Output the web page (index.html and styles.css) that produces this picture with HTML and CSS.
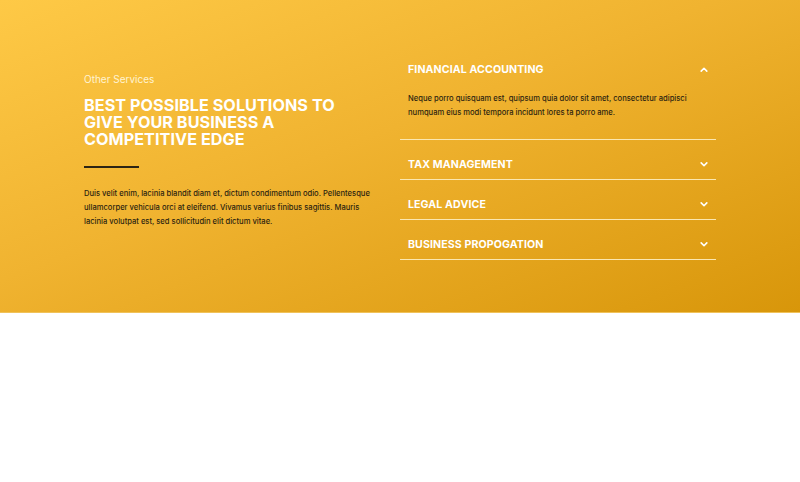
FILE: index.html
```html
<!DOCTYPE html>
<html>
<head>
<meta charset="utf-8">
<link rel="stylesheet" href="styles.css">
</head>
<body>
<section class="services">
  <div class="container">
    <div class="intro">
      <p class="eyebrow">Other Services</p>
      <h2 class="title">BEST POSSIBLE SOLUTIONS TO GIVE YOUR BUSINESS A COMPETITIVE EDGE</h2>
      <div class="divider"></div>
      <p class="text">Duis velit enim, lacinia blandit diam et, dictum condimentum odio. Pellentesque ullamcorper vehicula orci at eleifend. Vivamus varius finibus sagittis. Mauris lacinia volutpat est, sed sollicitudin elit dictum vitae.</p>
    </div>
    <div class="accordion">
      <div class="item open">
        <div class="head"><span>FINANCIAL ACCOUNTING</span>
          <svg class="chev" viewBox="0 0 10 6" width="8" height="5"><path d="M1.5 5 L5 1.5 L8.5 5" fill="none" stroke="#fff" stroke-width="2" stroke-linecap="round" stroke-linejoin="round"/></svg>
        </div>
        <p class="body">Neque porro quisquam est, quipsum quia dolor sit amet, consectetur adipisci numquam eius modi tempora incidunt lores ta porro ame.</p>
      </div>
      <div class="item">
        <div class="head"><span>TAX MANAGEMENT</span>
          <svg class="chev" viewBox="0 0 10 6" width="8" height="5"><path d="M1.5 1 L5 4.5 L8.5 1" fill="none" stroke="#fff" stroke-width="2" stroke-linecap="round" stroke-linejoin="round"/></svg>
        </div>
      </div>
      <div class="item">
        <div class="head"><span>LEGAL ADVICE</span>
          <svg class="chev" viewBox="0 0 10 6" width="8" height="5"><path d="M1.5 1 L5 4.5 L8.5 1" fill="none" stroke="#fff" stroke-width="2" stroke-linecap="round" stroke-linejoin="round"/></svg>
        </div>
      </div>
      <div class="item">
        <div class="head"><span>BUSINESS PROPOGATION</span>
          <svg class="chev" viewBox="0 0 10 6" width="8" height="5"><path d="M1.5 1 L5 4.5 L8.5 1" fill="none" stroke="#fff" stroke-width="2" stroke-linecap="round" stroke-linejoin="round"/></svg>
        </div>
      </div>
    </div>
  </div>
</section>
<section class="blank"></section>
</body>
</html>
```
FILE: styles.css
```css
* { box-sizing: border-box; }
html, body { margin: 0; padding: 0; background: #fff; }
body { font-family: "Inter", "Roboto", sans-serif; }

.services {
  height: 313px;
  background: linear-gradient(to bottom right, #fec946 0%, #f0b330 45%, #d8960a 100%);
  border-bottom: 1px solid #f0c25a;
}
.container {
  display: flex;
  gap: 24px;
  padding: 55px 84px 0 84px;
}
.intro { width: 292px; }
.eyebrow {
  margin: 18px 0 0;
  font-size: 10px;
  line-height: 12px;
  color: #fff3d2;
  font-weight: 400;
}
.title {
  margin: 12px 0 0;
  font-size: 16.2px;
  line-height: 17px;
  font-weight: 700;
  color: #fff;
  letter-spacing: 0.05px;
}
.divider {
  width: 55px;
  height: 2px;
  background: #2c2414;
  margin-top: 18px;
}
.text {
  margin: 19px 0 0;
  font-size: 7.6px;
  line-height: 14px;
  color: #2d2410;
  font-weight: 500;
}
.accordion { width: 316px; }
.item {
  border-bottom: 1px solid #fbe7b0;
  padding-top: 10px;
}
.item.open { padding-top: 0; }
.head {
  display: flex;
  justify-content: space-between;
  align-items: center;
  padding: 0 8px;
  height: 29px;
}
.head span {
  font-size: 10.6px;
  font-weight: 700;
  color: #fff;
  letter-spacing: 0.1px;
}
.chev { margin-right: 0; }
.body {
  margin: 8px 0 0;
  padding: 0 8px 19px 8px;
  font-size: 7.6px;
  line-height: 14px;
  color: #2d2410;
  font-weight: 500;
}
.blank { height: 169px; background: #fff; }
```
